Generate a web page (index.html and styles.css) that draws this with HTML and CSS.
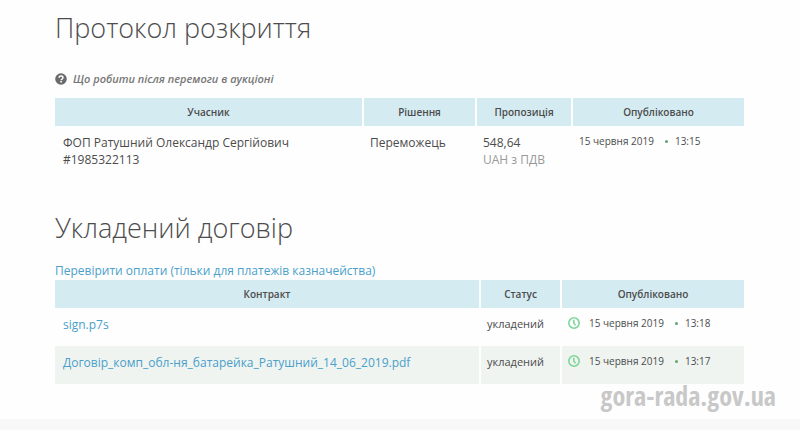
FILE: index.html
```html
<!DOCTYPE html>
<html lang="uk">
<head>
    <meta charset="UTF-8">
    <meta name="viewport" content="width=device-width, initial-scale=1.0">
    <title>Протокол розкриття</title>
    <link rel="stylesheet" href="styles.css">
</head>
<body>
    <main>
        <section>
            <h2>Протокол розкриття</h2>
            <p class="hint">
                <svg class="icon-help" viewBox="0 0 12 12" aria-hidden="true">
                    <circle cx="6" cy="6" r="5.8" fill="#6b6b6b"/>
                    <path d="M4 4.7C4.1 3.4 5 2.9 6 2.9c1.2 0 2 .7 2 1.7 0 1.5-1.9 1.4-1.9 2.7" fill="none" stroke="#fff" stroke-width="1.5"/>
                    <rect x="5.3" y="8" width="1.6" height="1.5" fill="#fff"/>
                </svg>
                <span>Що робити після перемоги в аукціоні</span>
            </p>
            <table class="protocol">
                <thead>
                    <tr>
                        <th>Учасник</th><th class="decision">Рішення</th><th class="offer">Пропозиція</th><th class="published">Опубліковано</th>
                    </tr>
                </thead>
                <tbody>
                    <tr>
                        <td>ФОП Ратушний Олександр Сергійович<br>#1985322113</td>
                        <td>Переможець</td>
                        <td>548,64<br><span class="currency">UAH з ПДВ</span></td>
                        <td>
                            <div class="date"><span>15 червня 2019</span><i class="dot"></i><span>13:15</span></div>
                        </td>
                    </tr>
                </tbody>
            </table>
        </section>

        <section>
            <h2>Укладений договір</h2>
            <a class="check" href="#">Перевірити оплати (тільки для платежів казначейства)</a>
            <table class="contract">
                <thead>
                    <tr>
                        <th>Контракт</th><th class="status">Статус</th><th class="published">Опубліковано</th>
                    </tr>
                </thead>
                <tbody>
                    <tr>
                        <td><a href="#">sign.p7s</a></td>
                        <td class="state">укладений</td>
                        <td>
                            <div class="date">
                                <svg class="icon-clock" viewBox="0 0 12 12" aria-hidden="true">
                                    <circle cx="6" cy="6" r="5.2"/>
                                    <path d="M5.8 2.8V6l1.7 2.4"/>
                                </svg>
                                <span>15 червня 2019</span><i class="dot"></i><span>13:18</span>
                            </div>
                        </td>
                    </tr>
                    <tr>
                        <td><a href="#">Договір_комп_обл-ня_батарейка_Ратушний_14_06_2019.pdf</a></td>
                        <td class="state">укладений</td>
                        <td>
                            <div class="date">
                                <svg class="icon-clock" viewBox="0 0 12 12" aria-hidden="true">
                                    <circle cx="6" cy="6" r="5.2"/>
                                    <path d="M5.8 2.8V6l1.7 2.4"/>
                                </svg>
                                <span>15 червня 2019</span><i class="dot"></i><span>13:17</span>
                            </div>
                        </td>
                    </tr>
                </tbody>
            </table>
        </section>
    </main>
    <footer></footer>
    <div class="watermark">gora-rada.gov.ua</div>
</body>
</html>
```

FILE: styles.css
```css
* { box-sizing: border-box; }
body {
    position: relative;
    display: flex;
    flex-direction: column;
    min-height: 100vh;
    margin: 0;
    background-color: #fefefe;
    color: #4c4c4c;
    font: 12px/17px "Open Sans", sans-serif;
}
main {
    padding: 8px 56px 35px 55px;
}
section + section {
    margin-top: 32px;
}
h2 {
    margin: 0 0 14px;
    font-size: 27px;
    font-weight: 300;
    line-height: 40px;
}
a {
    color: #4a9fcb;
    text-decoration: none;
}
.hint {
    display: flex;
    align-items: center;
    gap: 6px;
    margin: 0;
    padding: 8px 0 10px;
    color: #777;
    font-size: 11px;
    font-style: italic;
    font-weight: 600;
    line-height: 18px;
}
.icon-help {
    width: 12px;
    height: 12px;
}
.check {
    display: block;
    line-height: 18px;
}
table {
    width: 100%;
    table-layout: fixed;
    border-collapse: separate;
    border-spacing: 0;
}
th {
    padding: 5px 8px;
    background-color: #d5ebf2;
    font-size: 10px;
    font-weight: 600;
    line-height: 18px;
}
td {
    padding: 8px 6px;
    vertical-align: top;
}
td:first-child {
    padding-left: 8px;
}
th + th, td + td {
    border-left: 2px solid #fefefe;
}
.decision {
    width: 113px;
}
.offer {
    width: 96px;
}
.protocol .published {
    width: 173px;
}
.status {
    width: 81px;
}
.contract .published {
    width: 184px;
}
.contract td {
    padding-bottom: 13px;
}
.contract tbody tr:nth-child(even) {
    background-color: #eff4f1;
}
.currency {
    color: #999;
}
.contract .state {
    font-size: 11px;
    line-height: 16px;
}
.date {
    display: flex;
    align-items: center;
    font-size: 10px;
    line-height: 14px;
}
.dot {
    width: 3px;
    height: 3px;
    margin: 0 7px 0 11px;
    border-radius: 50%;
    background-color: #5fa573;
}
.icon-clock {
    width: 12px;
    height: 12px;
    margin-right: 9px;
    fill: none;
    stroke: #7fd69a;
    stroke-width: 1.6;
}
footer {
    flex: 1;
    min-height: 11px;
    background-color: #f8f8f8;
}
.watermark {
    position: absolute;
    right: 24px;
    bottom: 20px;
    color: #c8c8c8;
    font: bold 26px/28px "Open Sans Condensed", "Liberation Sans Narrow", sans-serif;
}
```
